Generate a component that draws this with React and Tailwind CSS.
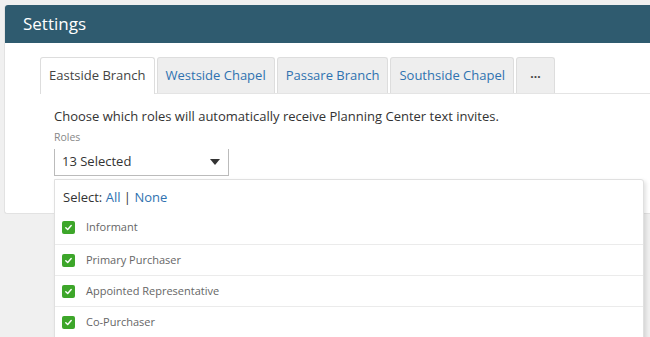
import React from 'react';

const tabs = ['Eastside Branch', 'Westside Chapel', 'Passare Branch', 'Southside Chapel'];
const roles = ['Informant', 'Primary Purchaser', 'Appointed Representative', 'Co-Purchaser'];

const Check = () => (
    <span className="w-[13px] h-[13px] rounded-[2px] bg-[#3da62a] flex items-center justify-center shrink-0">
        <svg width="9" height="9" viewBox="0 0 10 10">
            <path d="M2 5.2 L4.1 7.2 L8 2.8" fill="none" stroke="#fff" strokeWidth="1.6" strokeLinecap="round" strokeLinejoin="round" />
        </svg>
    </span>
);

const App = () => {
    return (
        <div className="w-[650px] h-[337px] bg-[#f0f0f0] overflow-hidden pt-[5px] pl-[4px] relative" style={{ fontFamily: '"Open Sans", sans-serif' }}>
            <div className="w-[660px] h-[209px] bg-white border-l border-b border-[#e2e2e2] rounded-tl-[3px] rounded-bl-[3px]">
                <div className="h-[38px] bg-[#2f5b6f] rounded-tl-[3px] flex items-center pl-[18px] text-white text-[17px]">
                    Settings
                </div>

                {/* tab bar */}
                <div className="mt-[15px] ml-[35px] flex items-end gap-[2px] border-b border-[#e4e4e4] h-[36px]">
                    {tabs.map((t, i) => (
                        <div
                            key={t}
                            className={
                                i === 0
                                    ? 'h-[37px] -mb-px px-[8px] flex items-center bg-white border border-b-0 border-[#dddddd] rounded-t-[3px] text-[13px] text-[#444]'
                                    : 'h-[36px] px-[8px] flex items-center bg-[#eeeeee] border border-b-0 border-[#dddddd] rounded-t-[3px] text-[13px] text-[#2f72b0]'
                            }
                        >
                            {t}
                        </div>
                    ))}
                    <div className="h-[36px] w-[39px] flex items-center justify-center bg-[#eeeeee] border border-b-0 border-[#dddddd] rounded-t-[3px] text-[12px] text-[#444] font-bold leading-none pb-[4px]">
                        ...
                    </div>
                </div>

                <div className="pl-[49px] pt-[14px]">
                    <p className="text-[13px] text-[#333] leading-[16px]">
                        Choose which roles will automatically receive Planning Center text invites.
                    </p>
                    <div className="text-[10.5px] text-[#888] mt-[7px] leading-[13px]">Roles</div>
                    <div className="mt-[5px] w-[175px] h-[27px] border-x border-b border-[#bbb] flex items-center justify-between pl-[7px] pr-[8px] text-[13px] text-[#333]">
                        <span>13 Selected</span>
                        <svg width="10" height="6" viewBox="0 0 10 6">
                            <path d="M0 0 L10 0 L5 6 Z" fill="#333" />
                        </svg>
                    </div>
                </div>
            </div>

            {/* open dropdown list */}
            <div className="absolute left-[54px] top-[179px] w-[590px] h-[170px] bg-white border border-[#e0e0e0] rounded-tr-[3px] shadow-[2px_2px_4px_rgba(0,0,0,0.12)]">
                <div className="h-[33px] flex items-center pl-[8px] pt-[2px] text-[13px] text-[#333]">
                    Select:&nbsp;<span className="text-[#2f72b0]">All</span>&nbsp;|&nbsp;<span className="text-[#2f72b0]">None</span>
                </div>
                {roles.map((r, i) => (
                    <div key={r} className={(i === 0 ? 'h-[32px] pb-[3px] ' : 'h-[31px] ') + 'flex items-center gap-[11px] pl-[7px] border-b border-[#ebebeb] text-[11px] text-[#666]'}>
                        <Check />
                        <span>{r}</span>
                    </div>
                ))}
            </div>
        </div>
    );
};

export default App;
